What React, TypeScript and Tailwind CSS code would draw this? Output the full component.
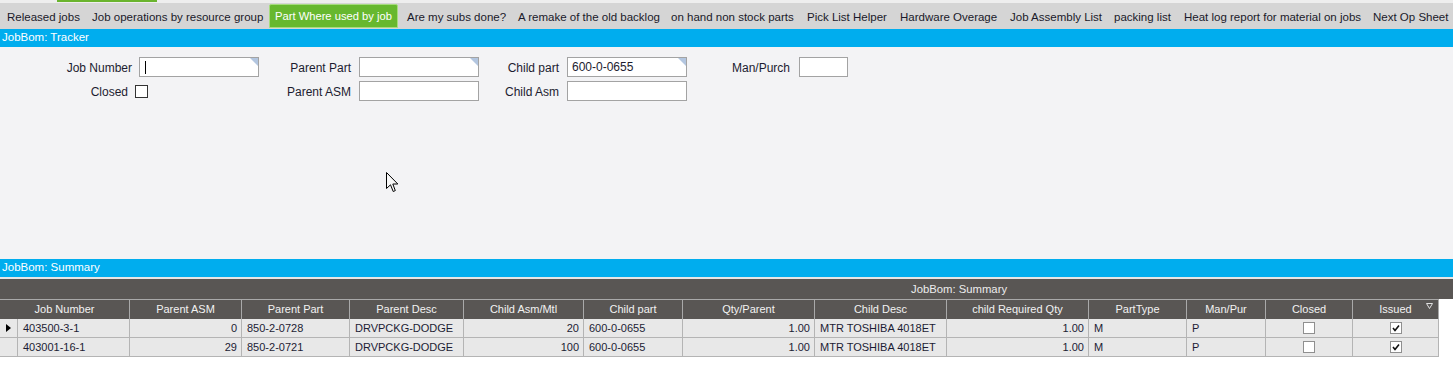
import React from "react";

const tabs: [string, number][] = [
  ["Released jobs", 85],
  ["Job operations by resource group", 183],
  ["Part Where used by job", 129],
  ["Are my subs done?", 111],
  ["A remake of the old backlog", 153],
  ["on hand non stock parts", 136],
  ["Pick List Helper", 93],
  ["Hardware Overage", 110],
  ["Job Assembly List", 104],
  ["packing list", 70],
  ["Heat log report for material on jobs", 189],
  ["Next Op Sheet", 86],
];

type Col = { label: string; w: number; align: "left" | "right" | "center"; top?: boolean };
const cols: Col[] = [
  { label: "Job Number", w: 112, align: "left" },
  { label: "Parent ASM", w: 112, align: "right" },
  { label: "Parent Part", w: 108, align: "left" },
  { label: "Parent Desc", w: 114, align: "left", top: true },
  { label: "Child Asm/Mtl", w: 120, align: "right" },
  { label: "Child part", w: 99, align: "left" },
  { label: "Qty/Parent", w: 132, align: "right" },
  { label: "Child Desc", w: 132, align: "left", top: true },
  { label: "child Required Qty", w: 142, align: "right" },
  { label: "PartType", w: 98, align: "left" },
  { label: "Man/Pur", w: 79, align: "left" },
  { label: "Closed", w: 87, align: "center" },
  { label: "Issued", w: 86, align: "center" },
];

const rows: (string | boolean)[][] = [
  ["403500-3-1", "0", "850-2-0728", "DRVPCKG-DODGE", "20", "600-0-0655", "1.00", "MTR TOSHIBA 4018ET", "1.00", "M", "P", false, true],
  ["403001-16-1", "29", "850-2-0721", "DRVPCKG-DODGE", "100", "600-0-0655", "1.00", "MTR TOSHIBA 4018ET", "1.00", "M", "P", false, true],
];

function Corner() {
  return (
    <svg className="absolute right-0 top-0" width="8" height="8" viewBox="0 0 8 8">
      <polygon points="0,0 8,0 8,8" fill="#b3c6e0" />
    </svg>
  );
}

function Input({ w, corner, children }: { w: number; corner?: boolean; children?: React.ReactNode }) {
  return (
    <div
      className="relative h-[20px] border border-[#a3a3a3] bg-white flex items-center pl-[4px] text-[12px] text-[#1c1c30]"
      style={{ width: w }}
    >
      {children}
      {corner && <Corner />}
    </div>
  );
}

function GridCheck({ checked }: { checked: boolean }) {
  return (
    <div className="w-[12px] h-[12px] border border-[#8f8f8f] bg-white flex items-center justify-center">
      {checked && (
        <svg width="8" height="8" viewBox="0 0 8 8">
          <path d="M1 4 L3 6.5 L7 1.5" stroke="#111" strokeWidth="1.6" fill="none" />
        </svg>
      )}
    </div>
  );
}

export default function App() {
  return (
    <div
      className="relative w-[1453px] h-[368px] overflow-hidden bg-white text-[#1c1c30]"
      style={{ fontFamily: '"Liberation Sans", Arial, sans-serif' }}
    >
      {/* top strip */}
      <div className="h-[3px] bg-[#eeeeee] flex">
        <div className="ml-[57px] w-[100px] h-[2px] bg-[#6ab42e]" />
      </div>
      {/* tabs */}
      <div className="h-[26px] bg-[#d5d5d5] flex items-center pl-[1px] overflow-hidden">
        {tabs.map(([t, w], i) =>
          i === 2 ? (
            <div
              key={t}
              className="shrink-0 h-[24px] mr-[3px] pl-[5px] flex items-center rounded-t-[2px] border border-[#a6dc7e] bg-[#67b82f] text-white text-[11.2px] whitespace-nowrap"
              style={{ width: w }}
            >
              {t}
            </div>
          ) : (
            <div
              key={t}
              className="shrink-0 h-[24px] pt-[3px] pl-[6px] flex items-center text-[11.5px] text-[#1a1a2a] whitespace-nowrap"
              style={{ width: w }}
            >
              {t}
            </div>
          )
        )}
      </div>
      {/* blue bar */}
      <div className="h-[18px] bg-[#00adee] text-white text-[11.5px] flex items-center pl-[2px]">JobBom: Tracker</div>
      {/* form body */}
      <div className="h-[212px] bg-[#f3f3f5] pt-[10px] relative">
        <div className="flex flex-col gap-[4px] text-[12px]">
          <div className="flex items-center">
            <div className="w-[132px] text-right pt-[1px]">Job Number</div>
            <div className="w-[7px]" />
            <Input w={120} corner>
              <div className="w-[1px] h-[13px] bg-black ml-[1px]" />
            </Input>
            <div className="w-[92px] text-right pt-[1px]">Parent Part</div>
            <div className="w-[8px]" />
            <Input w={120} corner />
            <div className="w-[80px] text-right pt-[1px]">Child part</div>
            <div className="w-[8px]" />
            <Input w={120} corner>
              600-0-0655
            </Input>
            <div className="w-[103px] text-right pt-[1px]">Man/Purch</div>
            <div className="w-[9px]" />
            <Input w={49} />
          </div>
          <div className="flex items-center">
            <div className="w-[128px] text-right pt-[1px]">Closed</div>
            <div className="w-[7px]" />
            <div className="w-[13px] h-[13px] border border-[#333] bg-white" />
            <div className="w-[111px]" />
            <div className="w-[92px] text-right pt-[1px]">Parent ASM</div>
            <div className="w-[8px]" />
            <Input w={120} />
            <div className="w-[80px] text-right pt-[1px]">Child Asm</div>
            <div className="w-[8px]" />
            <Input w={120} />
          </div>
        </div>
        {/* mouse pointer */}
        <svg className="absolute left-[386px] top-[125px]" width="13" height="21" viewBox="0 0 13 21">
          <path
            d="M0.5 0.5 L0.5 16.5 L4.5 12.8 L7.2 19.5 L9.3 18.6 L6.8 12 L11.8 12 Z"
            fill="#f8f8f8"
            stroke="#000"
            strokeWidth="1"
            strokeLinejoin="miter"
          />
        </svg>
      </div>
      {/* summary blue bar */}
      <div className="h-[18px] bg-[#00adee] text-white text-[11.5px] flex items-center pl-[2px]">JobBom: Summary</div>
      <div className="h-[2px] bg-[#e6e6e6]" />
      {/* grid */}
      <div className="h-[20px] bg-[#595654] text-[#ececec] text-[11.3px] flex items-center pl-[911px]">JobBom: Summary</div>
      <div className="flex h-[20px] text-[11px] text-[#f2f2f2]">
        {cols.map((c, i) => (
          <div
            key={c.label}
            className="relative bg-[#595654] border-r border-t border-[#a9a9a9] flex items-center justify-center"
            style={{ width: i === 0 ? c.w + 18 : c.w }}
          >
            {c.label}
            {i === cols.length - 1 && (
              <svg className="absolute right-[5px] top-[3px]" width="7" height="6" viewBox="0 0 7 6">
                <polygon points="0.5,0.5 6.5,0.5 3.5,5.5" fill="none" stroke="#e0e0e0" strokeWidth="1" />
              </svg>
            )}
          </div>
        ))}
      </div>
      {rows.map((r, ri) => (
        <div key={ri} className="flex h-[19px] text-[11px] text-[#1c1c34]">
          <div className="w-[18px] bg-[#e8e8e8] border-r border-b border-[#b4b4b4] flex items-center justify-center">
            {ri === 0 && (
              <svg width="5" height="8" viewBox="0 0 5 8">
                <polygon points="0,0 5,4 0,8" fill="#000" />
              </svg>
            )}
          </div>
          {cols.map((c, ci) => {
            const v = r[ci];
            return (
              <div
                key={ci}
                className={
                  "bg-[#e8e8e8] border-r border-b border-[#b4b4b4] flex whitespace-nowrap " +
                  (c.top ? "items-start pt-[1px] " : "items-center ") +
                  (c.align === "right"
                    ? "justify-end pr-[4px]"
                    : c.align === "center"
                    ? "justify-center"
                    : "justify-start pl-[5px]")
                }
                style={{ width: c.w }}
              >
                {typeof v === "boolean" ? <GridCheck checked={v} /> : v}
              </div>
            );
          })}
        </div>
      ))}
    </div>
  );
}
